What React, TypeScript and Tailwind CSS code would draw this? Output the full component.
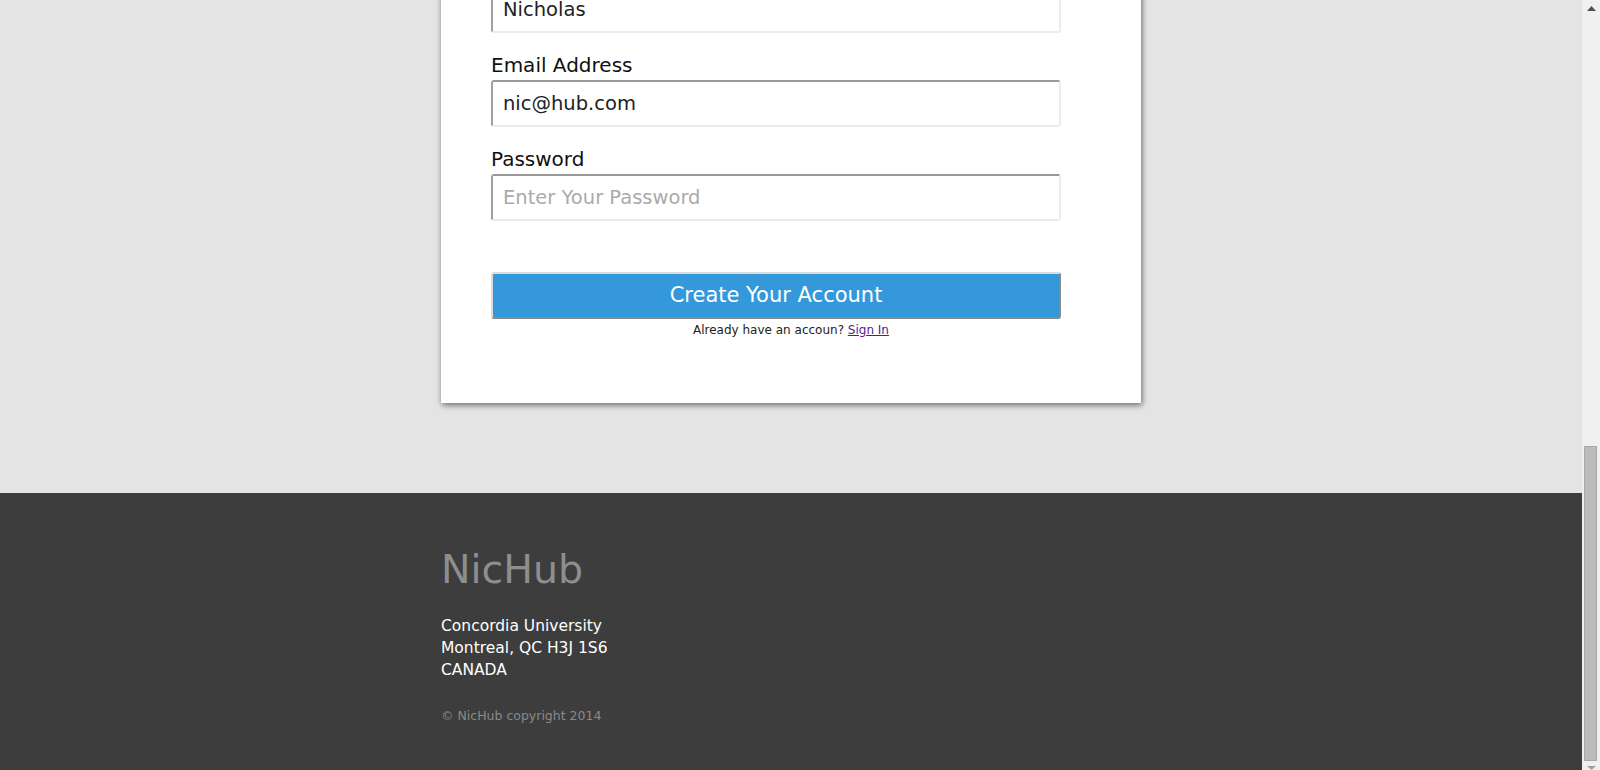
import { useState } from "react";

function Field({ label, value, placeholder, type = "text", first = false }: { label: string; value?: string; placeholder?: string; type?: string; first?: boolean }) {
  const [val, setVal] = useState(value ?? "");
  return (
    <div className={first ? "" : "mt-5"}>
      <label className="mb-[3px] block text-[20px] leading-[24px] text-[#111]">{label}</label>
      <input
        type={type}
        value={val}
        placeholder={placeholder}
        onChange={(e) => setVal(e.target.value)}
        className="h-[47px] w-[570px] rounded-[3px] border-2 border-t-[#999] border-l-[#a0a0a0] border-r-[#ececec] border-b-[#ececec] bg-white px-[10px] text-[19.5px] text-[#222] outline-none placeholder:text-[#aaa]"
      />
    </div>
  );
}

function Scrollbar() {
  return (
    <div className="flex h-full w-[18px] shrink-0 flex-col bg-[#f0f0f0]">
      <div className="flex h-[17px] items-center justify-center">
        <svg width="9" height="5" viewBox="0 0 9 5">
          <polygon points="4.5,0 9,5 0,5" fill="#505050" />
        </svg>
      </div>
      <div className="flex-1" />
      <div className="ml-[2px] h-[315px] w-[13px] border border-[#a8a8a8] bg-[#bcbcbc]" />
      <div className="flex h-[9px] items-end justify-center">
        <svg width="9" height="4" viewBox="0 0 9 4">
          <polygon points="0,0 9,0 4.5,4" fill="#a0a0a0" />
        </svg>
      </div>
    </div>
  );
}

export default function App() {
  return (
    <div className="flex h-[770px] w-full overflow-hidden bg-[#e4e4e4] font-['DejaVu_Sans',sans-serif]">
      <div className="flex min-w-0 flex-1 flex-col justify-end overflow-hidden">
        <main className="shrink-0 pt-[60px] pb-[90px]">
          <div className="mx-auto w-[700px] bg-white px-[50px] pt-[40px] pb-[65px] shadow-[1px_2px_6px_rgba(0,0,0,0.55)]">
            <h1 className="mb-6 text-[30px] text-[#333]">Create an Account</h1>
            <Field label="First Name" value="Nicholas" first />
            <Field label="Email Address" value="nic@hub.com" type="email" />
            <Field label="Password" placeholder="Enter Your Password" type="password" />
            <button className="mt-[51px] h-[47px] w-[570px] rounded-[3px] border-2 border-t-[#dcdcdc] border-l-[#dcdcdc] border-r-[#888] border-b-[#888] bg-[#3498db] text-[21px] text-white">
              Create Your Account
            </button>
            <p className="mt-[4px] text-center text-[12px] leading-[15px] text-[#222]">
              Already have an accoun?{" "}
              <a href="#" className="text-[#551a8b] underline">
                Sign In
              </a>
            </p>
          </div>
        </main>
        <footer className="shrink-0 bg-[#3d3d3d] pt-[53px] pb-[46px]">
          <div className="mx-auto w-[700px]">
            <h2 className="text-[39.5px] leading-[47px] text-[#8e8e8e]">NicHub</h2>
            <div className="mt-[22px] text-[15.5px] leading-[22px] text-white">
              <div>Concordia University</div>
              <div>Montreal, QC H3J 1S6</div>
              <div>CANADA</div>
            </div>
            <p className="mt-[27px] text-[12.5px] leading-[16px] text-[#8a8a8a]">© NicHub copyright 2014</p>
          </div>
        </footer>
      </div>
      <Scrollbar />
    </div>
  );
}
